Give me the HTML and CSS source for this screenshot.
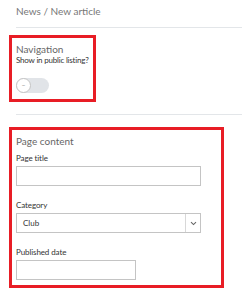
FILE: index.html
```html
<!DOCTYPE html>
<html lang="en">
<head>
    <meta charset="UTF-8">
    <title>New article</title>
    <link rel="stylesheet" href="styles.css">
</head>
<body>
    <div class="breadcrumb">News / New article</div>

    <!-- Navigation settings -->
    <section class="panel panel-nav">
        <h2>Navigation</h2>
        <div class="hint">Show in public listing?</div>
        <div class="toggle">
            <span class="knob">&ndash;</span>
        </div>
    </section>

    <hr class="divider">

    <!-- Page content -->
    <section class="panel panel-content">
        <h2>Page content</h2>

        <label class="field-label" for="title">Page title</label>
        <input class="field" type="text" id="title">

        <label class="field-label" for="category">Category</label>
        <div class="select">
            <span class="select-value">Club</span>
            <span class="select-arrow">
                <svg width="7" height="5" viewBox="0 0 7 5"><path d="M1 1.2 L3.5 3.6 L6 1.2" fill="none" stroke="#666" stroke-width="1.1"/></svg>
            </span>
        </div>

        <label class="field-label" for="published">Published date</label>
        <input class="field field-date" type="text" id="published">
    </section>
</body>
</html>
```

FILE: styles.css
```css
body {
    margin: 0;
    padding: 0 0 0 16px;
    font-family: Lato, "Noto Sans", sans-serif;
    background: #fff;
    color: #333;
}

.breadcrumb {
    font-size: 10px;
    line-height: 12px;
    color: #777;
    padding: 5px 0 10px;
    border-bottom: 1px solid #e3e6e9;
}

.panel {
    border: 3px solid #e81d25;
    margin-left: -7px;
    padding: 5px 4px 5px 4px;
}

.panel h2 {
    font-size: 10px;
    line-height: 12px;
    font-weight: normal;
    color: #666;
    margin: 0;
}

.panel-nav {
    width: 73px;
    margin-top: 7px;
    padding-bottom: 6px;
}

.hint {
    font-size: 8px;
    line-height: 10px;
    color: #333;
    letter-spacing: -0.2px;
}

.toggle {
    margin-top: 13px;
    width: 33px;
    height: 15px;
    border-radius: 8px;
    background: #e1e4e8;
    position: relative;
}

.knob {
    position: absolute;
    left: 0;
    top: 0;
    width: 13px;
    height: 13px;
    border: 1px solid #c4c4c4;
    border-radius: 50%;
    background: #fff;
    font-size: 7px;
    line-height: 13px;
    text-align: center;
    color: #999;
}

.divider {
    border: 0;
    border-top: 1px solid #e3e6e9;
    margin: 12px 0 0;
}

.panel-content {
    width: 201px;
    margin-top: 12px;
}

.field-label {
    display: block;
    font-size: 8px;
    line-height: 10px;
    color: #333;
    margin-top: 14px;
    letter-spacing: -0.1px;
}

.panel h2 + .field-label {
    margin-top: 6px;
}

.field {
    display: block;
    box-sizing: border-box;
    width: 185px;
    height: 20px;
    margin: 3px 0 0;
    border: 1px solid #c4c4c4;
    background: #fff;
    padding: 0 6px;
}

.field-date {
    width: 120px;
}

.select {
    box-sizing: border-box;
    width: 185px;
    height: 20px;
    margin-top: 3px;
    border: 1px solid #c4c4c4;
    display: flex;
    align-items: center;
}

.select-value {
    flex: 1;
    font-size: 8px;
    padding-left: 6px;
    color: #333;
}

.select-arrow {
    width: 14px;
    height: 100%;
    border-left: 1px solid #d8d8d8;
    display: flex;
    align-items: center;
    justify-content: center;
}
```
